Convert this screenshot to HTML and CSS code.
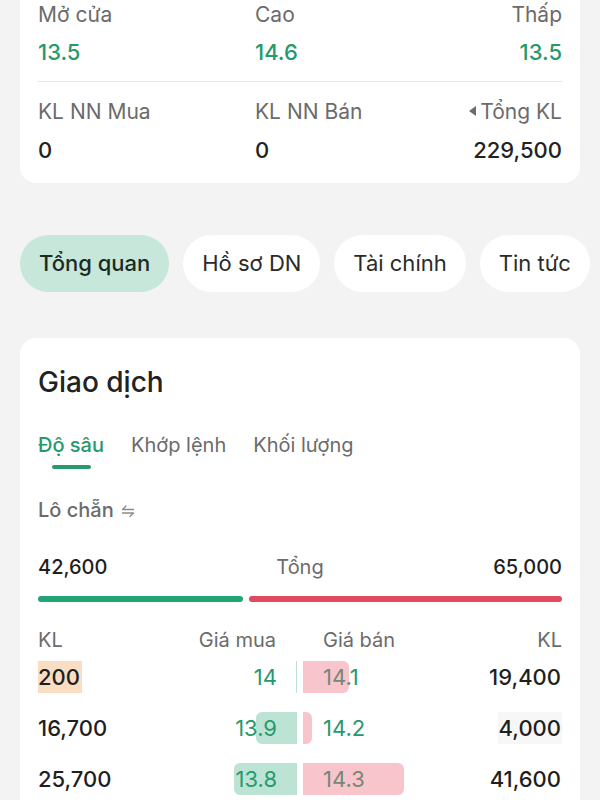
FILE: index.html
```html
<!DOCTYPE html>
<html lang="vi">
<head>
    <meta charset="UTF-8">
    <title>Giao dịch</title>
    <link rel="stylesheet" href="styles.css">
</head>
<body>
<div id="page">
    <div class="card quote">
        <div class="stats">
            <div class="stat">
                <div class="label">Mở cửa</div>
                <div class="value up">13.5</div>
            </div>
            <div class="stat">
                <div class="label">Cao</div>
                <div class="value up">14.6</div>
            </div>
            <div class="stat right">
                <div class="label">Thấp</div>
                <div class="value up">13.5</div>
            </div>
        </div>
        <div class="divider"></div>
        <div class="stats">
            <div class="stat">
                <div class="label">KL NN Mua</div>
                <div class="value">0</div>
            </div>
            <div class="stat">
                <div class="label">KL NN Bán</div>
                <div class="value">0</div>
            </div>
            <div class="stat right">
                <div class="label"><span class="tri"></span>Tổng KL</div>
                <div class="value">229,500</div>
            </div>
        </div>
    </div>

    <ul id="tabs">
        <li class="selected">Tổng quan</li>
        <li>Hồ sơ DN</li>
        <li>Tài chính</li>
        <li>Tin tức</li>
    </ul>

    <div class="card trade">
        <h2>Giao dịch</h2>
        <ul id="subtabs">
            <li class="selected">Độ sâu</li>
            <li>Khớp lệnh</li>
            <li>Khối lượng</li>
        </ul>

        <div class="lot">Lô chẵn
            <svg width="14" height="14" viewBox="0 0 14 14" fill="none" stroke="#8a8a8a" stroke-width="1.3" stroke-linecap="round">
                <path d="M1.5 5.5H12.5M1.5 5.5L5 2"/>
                <path d="M1.5 9H12.5M12.5 9L9 12.5"/>
            </svg>
        </div>

        <div class="total">
            <span class="num">42,600</span>
            <span class="mid">Tổng</span>
            <span class="num">65,000</span>
        </div>
        <div class="ratio">
            <div class="buy" style="width: 39.1%"></div>
            <div class="sell"></div>
        </div>

        <div class="book head">
            <div class="half">
                <span>KL</span>
                <span class="price">Giá mua</span>
            </div>
            <div class="half">
                <span class="price">Giá bán</span>
                <span>KL</span>
            </div>
        </div>

        <div class="book">
            <div class="half">
                <span class="vol hl-orange">200</span>
                <span class="price up">14</span>
                <i class="bar buybar" style="width: 1px"></i>
            </div>
            <div class="half">
                <span class="price up">14.1</span>
                <span class="vol">19,400</span>
                <i class="bar sellbar" style="width: 46px"></i>
            </div>
        </div>

        <div class="book">
            <div class="half">
                <span class="vol">16,700</span>
                <span class="price up">13.9</span>
                <i class="bar buybar" style="width: 41px"></i>
            </div>
            <div class="half">
                <span class="price up">14.2</span>
                <span class="vol hl-gray">4,000</span>
                <i class="bar sellbar" style="width: 9px"></i>
            </div>
        </div>

        <div class="book">
            <div class="half">
                <span class="vol">25,700</span>
                <span class="price up">13.8</span>
                <i class="bar buybar" style="width: 63px"></i>
            </div>
            <div class="half">
                <span class="price up">14.3</span>
                <span class="vol">41,600</span>
                <i class="bar sellbar" style="width: 101px"></i>
            </div>
        </div>
    </div>
</div>
</body>
</html>
```

FILE: styles.css
```css
*{
    margin: 0;
    padding: 0;
    box-sizing: border-box;
}
ul{
    list-style: none;
}
html, body{
    overflow: hidden;
}
body{
    background: #f3f3f3;
    font-family: Inter, "Noto Sans", sans-serif;
    color: #222;
}
#page{
    padding: 0 20px;
}

.card{
    background: #fff;
    border-radius: 16px;
}

/* top quote card */
.quote{
    margin-top: -20px;
    padding: 20px 18px 18px;
}
.stats{
    display: flex;
}
.stat{
    width: 217px;
    flex-shrink: 0;
}
.stat.right{
    flex: 1;
    min-width: 0;
    display: flex;
    flex-direction: column;
    align-items: flex-end;
    white-space: nowrap;
}
.label{
    font-size: 21px;
    line-height: 30px;
    color: #6b6b6b;
}
.value{
    margin-top: 7px;
    font-size: 22px;
    line-height: 30px;
    font-weight: 500;
    color: #222;
}
.up{
    color: #26996d;
}
.divider{
    height: 1px;
    background: #e6e6e6;
    margin: 14px 0 15px;
}
.stats + .divider + .stats .value{
    margin-top: 8px;
}
.tri{
    display: inline-block;
    width: 0;
    height: 0;
    border-top: 5px solid transparent;
    border-bottom: 5px solid transparent;
    border-right: 7px solid #6b6b6b;
    margin-right: 4px;
    vertical-align: 3px;
}

/* pill tabs */
#tabs{
    display: flex;
    gap: 14px;
    margin: 52px -20px 0 0;
    white-space: nowrap;
}
#tabs li{
    flex-shrink: 0;
    height: 57px;
    line-height: 57px;
    padding: 0 19px;
    border-radius: 29px;
    background: #fff;
    font-size: 22px;
    color: #2a2a2a;
}
#tabs li.selected{
    background: #c6e7da;
    font-weight: 500;
    color: #1c2a24;
}

/* trade card */
.trade{
    margin-top: 46px;
    padding: 26px 18px 40px;
}
.trade h2{
    font-size: 28px;
    line-height: 36px;
    font-weight: 500;
    color: #222;
}
#subtabs{
    display: flex;
    gap: 27px;
    margin-top: 31px;
}
#subtabs li{
    position: relative;
    font-size: 20px;
    line-height: 28px;
    color: #6b6b6b;
}
#subtabs li.selected{
    color: #26996d;
    font-weight: 500;
}
#subtabs li.selected:after{
    content: "";
    position: absolute;
    left: 50%;
    bottom: -10px;
    width: 39px;
    height: 4px;
    margin-left: -19px;
    border-radius: 2px;
    background: #26996d;
}
.lot{
    margin-top: 38px;
    font-size: 20px;
    line-height: 26px;
    font-weight: 500;
    color: #6b6b6b;
}
.lot svg{
    vertical-align: -1px;
    margin-left: 2px;
}
.total{
    display: flex;
    justify-content: space-between;
    margin-top: 30px;
    font-size: 20px;
    line-height: 28px;
}
.total .num{
    font-weight: 500;
    color: #1f1f1f;
    width: 120px;
}
.total .num:last-child{
    text-align: right;
}
.total .mid{
    color: #6b6b6b;
}
.ratio{
    display: flex;
    gap: 6px;
    margin-top: 15px;
    height: 6px;
}
.ratio div{
    border-radius: 3px;
}
.ratio .buy{
    background: #22a575;
}
.ratio .sell{
    flex: 1;
    background: #df4a5e;
}

/* order book */
.book{
    display: grid;
    grid-template-columns: 1fr 1fr;
    column-gap: 6px;
    margin-top: 19px;
    font-size: 22px;
    line-height: 32px;
}
.book.head{
    margin-top: 27px;
    font-size: 20px;
    line-height: 22px;
    color: #6b6b6b;
}
.book.head + .book{
    margin-top: 10px;
}
.half{
    position: relative;
    display: flex;
    justify-content: space-between;
}
.half .price{
    padding-right: 20px;
}
.half + .half .price{
    padding: 0 0 0 20px;
}
.book.head .half .price{
    padding-right: 21px;
}
.book.head .half + .half .price{
    padding: 0 0 0 20px;
}
.vol{
    font-weight: 500;
    color: #1f1f1f;
    padding: 0 1px;
}
.half:first-child .vol{
    padding-left: 0;
}
.hl-orange{
    background: #f9dec3;
    padding-right: 2px;
}
.hl-gray{
    background: #f7f7f7;
}
.bar{
    position: absolute;
    top: 0;
    height: 32px;
}
.buybar{
    right: 0;
    background: rgba(36, 163, 112, 0.3);
    border-radius: 6px 0 0 6px;
}
.sellbar{
    left: 0;
    background: rgba(238, 110, 130, 0.4);
    border-radius: 0 6px 6px 0;
}
```
